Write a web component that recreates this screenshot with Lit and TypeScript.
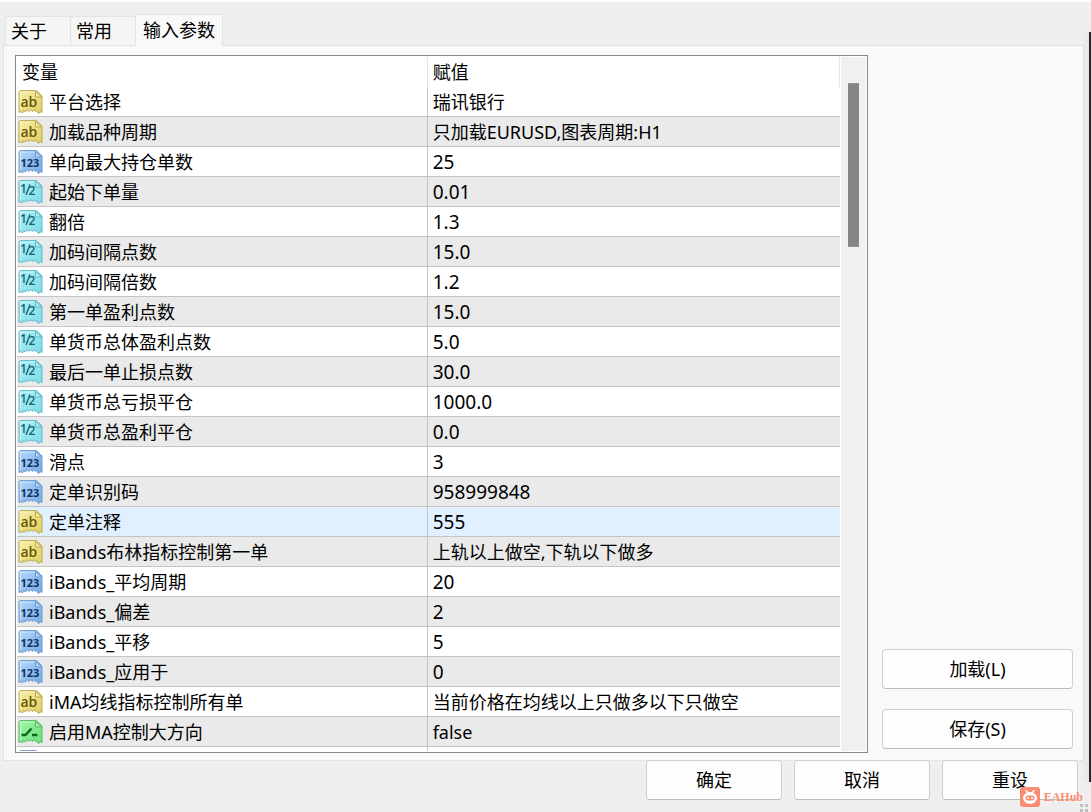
import { LitElement, html, svg, css, nothing } from "lit";
import { customElement, property, state } from "lit/decorators.js";

type Kind = "text" | "int" | "real" | "bool";

interface Param {
  kind: Kind;
  name: string;
  value: string;
}

const p = (kind: Kind, name: string, value: string): Param => ({ kind, name, value });

const PARAMS: Param[] = [
  p("text", "平台选择", "瑞讯银行"),
  p("text", "加载品种周期", "只加载EURUSD,图表周期:H1"),
  p("int", "单向最大持仓单数", "25"),
  p("real", "起始下单量", "0.01"),
  p("real", "翻倍", "1.3"),
  p("real", "加码间隔点数", "15.0"),
  p("real", "加码间隔倍数", "1.2"),
  p("real", "第一单盈利点数", "15.0"),
  p("real", "单货币总体盈利点数", "5.0"),
  p("real", "最后一单止损点数", "30.0"),
  p("real", "单货币总亏损平仓", "1000.0"),
  p("real", "单货币总盈利平仓", "0.0"),
  p("int", "滑点", "3"),
  p("int", "定单识别码", "958999848"),
  p("text", "定单注释", "555"),
  p("text", "iBands布林指标控制第一单", "上轨以上做空,下轨以下做多"),
  p("int", "iBands_平均周期", "20"),
  p("int", "iBands_偏差", "2"),
  p("int", "iBands_平移", "5"),
  p("int", "iBands_应用于", "0"),
  p("text", "iMA均线指标控制所有单", "当前价格在均线以上只做多以下只做空"),
  p("bool", "启用MA控制大方向", "false"),
  p("int", "", ""),
];

const TABS = ["关于", "常用", "输入参数"];

@customElement("param-icon")
class ParamIcon extends LitElement {
  @property() kind: Kind = "text";
  @property({ type: Boolean }) blank = false;

  static styles = css`
    :host {
      display: block;
      flex: none;
      width: 25px;
      height: 25px;
    }
    svg {
      display: block;
      overflow: visible;
    }
    .label {
      font-family: "Open Sans", sans-serif;
      font-weight: bold;
    }
    .ab {
      font-size: 14px;
      font-weight: 600;
    }
    .num {
      font-size: 11px;
    }
    .frac {
      font-size: 12px;
      font-weight: 600;
    }
  `;

  static palette: Record<Kind, string[]> = {
    text: ["#f8f0a4", "#dfcf5e", "#b9aa55", "#66560f"],
    int: ["#b4d8fb", "#74a9e4", "#6a9bd0", "#10335e"],
    real: ["#b0eff5", "#7adce8", "#62b9c6", "#17646f"],
    bool: ["#a4f5aa", "#69e077", "#58ba63", "#0b6a1c"],
  };

  private glyph(ink: string) {
    if (this.blank) return nothing;
    switch (this.kind) {
      case "text":
        return svg`<text class="label ab" x="2.500" y="17" fill=${ink}>ab</text>`;
      case "int":
        return svg`<text class="label num" x="2.500" y="16.500" fill=${ink}>123</text>`;
      case "real":
        return svg`<text class="label frac" x="2" y="13" fill=${ink}>1</text>
          <path d="M12 4.500 8 15" stroke=${ink} stroke-width="1.400" />
          <text class="label frac" x="10.500" y="15" fill=${ink}>2</text>`;
      default:
        return svg`<path d="M3.500 15h4l6-6.500M14 15h5.500" fill="none" stroke=${ink} stroke-width="2.400" />`;
    }
  }

  render() {
    const [light, dark, edge, ink] = ParamIcon.palette[this.kind];
    return html`<svg width="25" height="25" viewBox="0 -1 25 25" aria-hidden="true">
      <defs>
        <linearGradient id="g" x1="0" y1="0" x2="1" y2="1">
          <stop offset="0" stop-color=${light} />
          <stop offset="1" stop-color=${dark} />
        </linearGradient>
      </defs>
      <path
        d="M2 .6H18.500L24 6V22.500L22 21.500 20.500 23.700 18.500 20.500 17.500 21.500 16 19.500 14.500 21.500 12.500 19.500 11 21.500 9 19.500 7.500 22 5.500 20.500 4.500 23 3 21.500 1 22.500V1.600Z"
        fill="url(#g)" stroke=${edge} stroke-linejoin="round" />
      <path d="M2.500 20V2.100H17" fill="none" stroke="#fff" stroke-opacity=".45" />
      <path d="M17.500 1.500V7H23.500Z" fill=${light} stroke=${edge} />
      ${this.glyph(ink)}
    </svg>`;
  }
}

@customElement("app-root")
class AppRoot extends LitElement {
  @state() tab = 2;
  @state() selected = 14;

  static styles = css`
    :host {
      display: flex;
      flex-direction: column;
      position: relative;
      box-sizing: border-box;
      height: 100vh;
      overflow: hidden;
      border-top: 2px solid #fff;
      background: #efefef;
      color: #000;
      font: 18px/24px "Noto Sans", "Noto Sans CJK SC", sans-serif;
    }
    * {
      box-sizing: border-box;
    }
    button {
      font: inherit;
      color: inherit;
      margin: 0;
      cursor: default;
    }
    .tabs {
      display: flex;
      align-items: flex-end;
      padding: 12px 5px 0;
    }
    .tab {
      height: 29px;
      padding: 0 23px 0 5px;
      border: 1px solid #e3e3e3;
      border-bottom: 0;
      border-right: 0;
      background: #f5f5f5;
    }
    .tab.active {
      height: 32px;
      margin-bottom: -1px;
      padding: 0 7px 2px;
      border-right: 1px solid #e3e3e3;
      background: #f9f9f9;
      z-index: 1;
    }
    .panel {
      display: flex;
      flex: 1;
      min-height: 0;
      gap: 14px;
      margin: 0 7px 0 3px;
      padding: 9px 10px 7px 11px;
      border: 1px solid #e3e3e3;
      background: #f9f9f9;
    }
    .list {
      display: flex;
      flex: 1;
      min-width: 0;
      gap: 1px;
      padding: 1px;
      overflow: hidden;
      border: 1px solid #828790;
      background: #fff;
    }
    .rows {
      flex: 1;
      min-width: 0;
      overflow: hidden;
    }
    table {
      width: 100%;
      table-layout: fixed;
      border-collapse: separate;
      border-spacing: 0;
    }
    th,
    td {
      height: 30px;
      padding: 0 5px;
      text-align: left;
      font-weight: inherit;
      white-space: nowrap;
      overflow: hidden;
    }
    th {
      border-right: 1px solid #e5e5e5;
    }
    th:first-child {
      width: 49.9%;
    }
    td {
      border-bottom: 1px solid #c4c4c4;
    }
    .number {
      font-size: 19px;
    }
    .name {
      padding: 0 0 0 1px;
      border-right: 1px solid #c4c4c4;
    }
    .cell {
      display: flex;
      align-items: center;
      gap: 6px;
      height: 29px;
    }
    tbody tr:nth-child(even) {
      background: #eaeaea;
    }
    tbody tr.selected {
      background: #e0f0ff;
    }
    .scrollbar {
      flex: none;
      width: 25px;
      padding: 26px 7px;
      background: #f0f0f0;
    }
    .thumb {
      width: 11px;
      height: 164px;
      border: solid #959595;
      border-width: 1px 0;
      background: #858585;
    }
    .side {
      display: flex;
      flex: none;
      flex-direction: column;
      justify-content: flex-end;
      gap: 20px;
      width: 191px;
      padding-bottom: 4px;
    }
    .push {
      height: 40px;
      padding: 0;
      border: 1px solid #d0d0d0;
      border-bottom-color: #bcbcbc;
      border-radius: 4px;
      background: #fdfdfd;
    }
    .footer {
      display: flex;
      justify-content: flex-end;
      gap: 12px;
      margin-top: -1px;
      padding: 0 13px 12px;
    }
    .footer .push {
      width: 136px;
    }
    .edge {
      position: absolute;
      top: 30px;
      right: 0;
      bottom: 30px;
      width: 2px;
      background: #26282b;
      box-shadow: 0 0 8px rgba(0, 0, 0, 0.22);
    }
    .mark {
      position: absolute;
      right: 8px;
      bottom: 5px;
      display: flex;
      align-items: center;
      gap: 4px;
      color: #fb8c72;
      font: bold 12px/20px "Liberation Serif", serif;
      pointer-events: none;
    }
    .mark svg,
    .grip {
      display: block;
    }
    .grip {
      position: absolute;
      right: 0;
      bottom: 0;
    }
  `;

  render() {
    return html`
      <div class="tabs" role="tablist">
        ${TABS.map(
          (label, i) => html`<button
            class="tab ${i === this.tab ? "active" : ""}"
            role="tab"
            aria-selected=${i === this.tab}
            @click=${() => (this.tab = i)}
          >${label}</button>`
        )}
      </div>
      <div class="panel" role="tabpanel">
        <div class="list">
          <div class="rows">
            <table>
              <thead>
                <tr><th>变量</th><th>赋值</th></tr>
              </thead>
              <tbody>
                ${PARAMS.map(
                  (row, i) => html`<tr
                    class=${i === this.selected ? "selected" : ""}
                    @click=${() => (this.selected = i)}
                  >
                    <td class="name">
                      <div class="cell">
                        <param-icon .kind=${row.kind} .blank=${!row.name}></param-icon>
                        <span>${row.name}</span>
                      </div>
                    </td>
                    <td class=${/^[\d.]+$/.test(row.value) ? "number" : ""}>${row.value}</td>
                  </tr>`
                )}
              </tbody>
            </table>
          </div>
          <div class="scrollbar"><div class="thumb"></div></div>
        </div>
        <div class="side">
          <button class="push">加载(L)</button>
          <button class="push">保存(S)</button>
        </div>
      </div>
      <div class="footer">
        <button class="push">确定</button>
        <button class="push">取消</button>
        <button class="push">重设</button>
      </div>
      <div class="edge"></div>
      <svg class="grip" width="12" height="10" viewBox="0 0 12 10" aria-hidden="true">
        <path d="M1 2h3v3h-3zM6 2h3v3h-3zM1 7h3v3h-3zM6 7h3v3h-3z" fill="#bdbdbd" />
      </svg>
      <div class="mark">
        <svg width="20" height="20" viewBox="0 0 20 20" aria-hidden="true">
          <rect width="20" height="20" rx="3" fill="#fb8c72" />
          <path d="M6 3.500 8 6M14 3.500 12 6" stroke="#fff" stroke-width="1.500" stroke-linecap="round" />
          <ellipse cx="10" cy="11" rx="7" ry="6" fill="#fff" />
          <rect x="5.500" y="8.500" width="9" height="5" rx="2.500" fill="#fb8c72" />
          <circle cx="8" cy="11" r="1.100" fill="#fff" />
          <circle cx="12" cy="11" r="1.100" fill="#fff" />
        </svg>
        <span>EAHub</span>
      </div>
    `;
  }
}
